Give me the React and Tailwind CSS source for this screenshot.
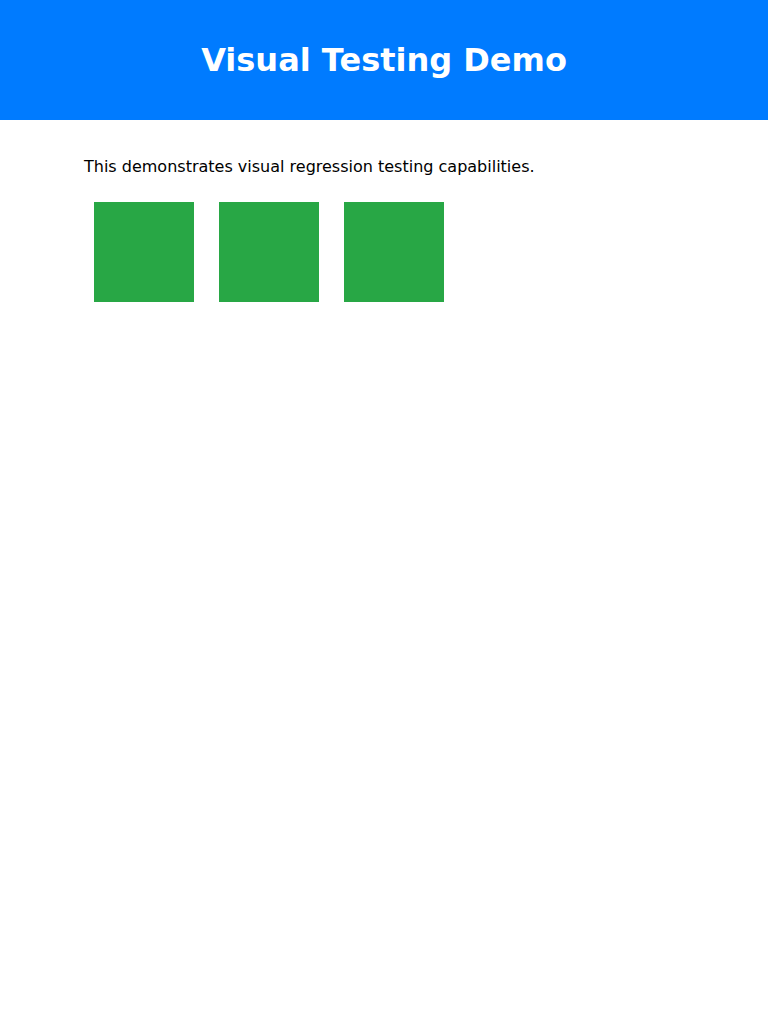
import React from 'react';

const App = () => {
  const boxes = [1, 2, 3]

  return (
    <div className="min-h-screen bg-white" style={{ fontFamily: '"DejaVu Sans", sans-serif' }}>
      <header className="h-[120px] flex items-center justify-center bg-[#007bff]">
        <h1 className="text-[32px] font-bold text-white leading-[37px]">Visual Testing Demo</h1>
      </header>

      <main className="max-w-[600px] mx-auto pt-[37px]">
        <p className="text-[16px] leading-[19px] text-black">
          This demonstrates visual regression testing capabilities.
        </p>
        <div className="flex gap-[25px] mt-[26px] pl-[10px]">
          {boxes.map((b) => (
            <div key={b} className="w-[100px] h-[100px] bg-[#28a745]" />
          ))}
        </div>
      </main>
    </div>
  )
}

export default App;
